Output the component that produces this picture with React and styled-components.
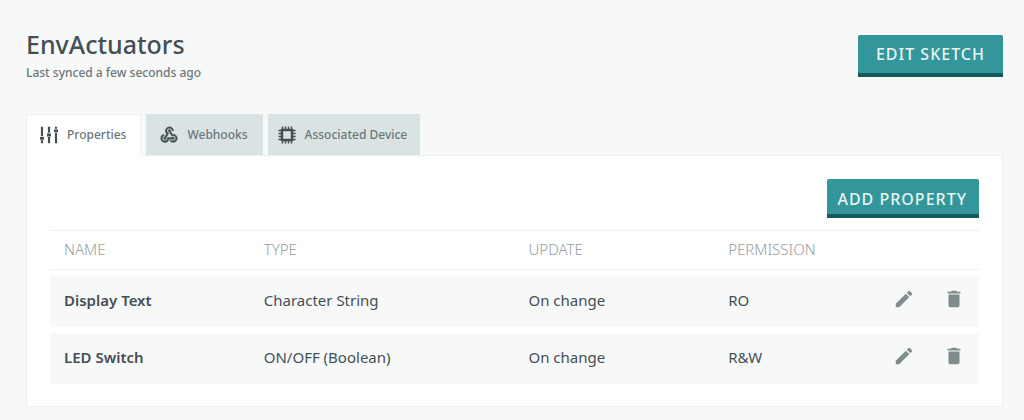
import React, { useState } from 'react';
import styled, { createGlobalStyle } from 'styled-components';
import { MdEdit, MdDelete, MdWebhook } from 'react-icons/md';

const GlobalStyle = createGlobalStyle`
    * {
        box-sizing: border-box;
    }

    body {
        margin: 0;
        background: #f7f9f8;
        color: #434f54;
        font-family: "Noto Sans", "Open Sans", sans-serif;
    }
`;

const Page = styled.main`
    padding: 30px 21px 13px 26px;
`;

const Header = styled.header`
    display: flex;
    justify-content: space-between;
    align-items: flex-start;
    height: 84px;

    h1 {
        margin: 0;
        font-size: 25px;
        font-weight: 500;
        line-height: 28px;
    }

    p {
        margin: 6px 0 0;
        font-size: 12px;
        font-weight: 500;
        line-height: 18px;
        color: #6b777b;
    }
`;

const Button = styled.button`
    height: ${props => props.$large ? '42px' : '39px'};
    margin-top: ${props => props.$large ? '5px' : '0'};
    padding: ${props => props.$large ? '0 18px' : '4px 12px 0 10px'};
    border: 0;
    border-bottom: 4px solid #16595c;
    border-radius: 2px 2px 0 0;
    background: #32969b;
    color: #e9f4f3;
    font-family: inherit;
    font-size: 16px;
    font-weight: 500;
    line-height: 20px;
    letter-spacing: 1px;
    text-transform: uppercase;
    cursor: pointer;
`;

const Tabs = styled.div`
    display: flex;
    gap: 5px;
`;

const Tab = styled.button`
    display: flex;
    align-items: center;
    gap: 8px;
    height: 42px;
    margin-bottom: -1px;
    padding: ${props => props.$wide ? '0 12px 0 8px' : '0 14px 0 12px'};
    position: relative;
    border: 1px solid ${props => props.$active ? '#ecf1f1' : '#dae3e3'};
    border-bottom-color: ${props => props.$active ? '#ffffff' : '#ecf1f1'};
    background: ${props => props.$active ? '#ffffff' : '#dae3e3'};
    color: #6b777b;
    font-family: inherit;
    font-size: 12px;
    font-weight: 500;
    line-height: 18px;
    cursor: pointer;

    svg {
        width: 20px;
        height: 20px;
        color: #434f54;
    }
`;

const WebhookIcon = styled(MdWebhook)`
    path:last-child {
        stroke-width: 0.5px;
    }
`;

const Panel = styled.section`
    padding: 23px 23px 16px;
    border: 1px solid #ecf1f1;
    background: #ffffff;
`;

const Toolbar = styled.div`
    display: flex;
    justify-content: flex-end;
    margin-bottom: 6px;
`;

const Table = styled.table`
    width: 100%;
    table-layout: fixed;
    border-collapse: separate;
    border-spacing: 0 6px;
    font-size: 15px;
    line-height: 20px;

    th, td {
        padding: 0 14px 3px;
        text-align: left;
    }

    thead th {
        height: 40px;
        padding-bottom: 2px;
        border-top: 1px solid #ecf1f1;
        border-bottom: 1px solid #ecf1f1;
        color: #95a0a2;
        font-weight: 300;
        text-transform: uppercase;
    }

    tbody th, tbody td {
        height: 51px;
        background: #f7f9f8;
    }

    tbody th {
        font-weight: 600;
    }
`;

const Column = styled.col`
    width: ${props => props.$width};
`;

const Actions = styled.div`
    display: flex;
    justify-content: flex-end;
    gap: 28px;
    padding-bottom: 2px;
`;

const IconButton = styled.button`
    display: flex;
    padding: 0;
    border: 0;
    background: none;
    color: #7f8c8d;
    cursor: pointer;

    svg {
        width: 22px;
        height: 22px;
    }
`;

function SlidersIcon() {
    return (
        <svg viewBox="0 0 20 20" fill="none" stroke="currentColor" strokeWidth="2.2" aria-hidden="true">
            <path d="M3 1.8v9.4M3 15.2v3M10 1.8v6M10 12v6.2M17 1.8v2M17 7.8v10.4" />
            <path strokeWidth="2.8" d="M1 13.4h4M8 10h4M15 5.8h4" />
        </svg>
    )
}

function ChipIcon() {
    return (
        <svg viewBox="0 0 20 20" fill="none" stroke="currentColor" aria-hidden="true">
            <rect x="5" y="5" width="10" height="10" strokeWidth="2.4" />
            <path strokeWidth="1.5" d="M5.5 1.5v3M8.5 1.5v3M11.5 1.5v3M14.5 1.5v3M5.5 15.5v3M8.5 15.5v3M11.5 15.5v3M14.5 15.5v3M1.5 5.5h3M1.5 8.5h3M1.5 11.5h3M1.5 14.5h3M15.5 5.5h3M15.5 8.5h3M15.5 11.5h3M15.5 14.5h3" />
        </svg>
    )
}

const tabs = [
    { name: 'Properties', Icon: SlidersIcon },
    { name: 'Webhooks', Icon: WebhookIcon },
    { name: 'Associated Device', Icon: ChipIcon, wide: true },
];

const properties = [
    { name: 'Display Text', type: 'Character String', update: 'On change', permission: 'RO' },
    { name: 'LED Switch', type: 'ON/OFF (Boolean)', update: 'On change', permission: 'R&W' },
];

export default function App() {

    const [activeTab, setActiveTab] = useState('Properties');

    return (
        <Page>
            <GlobalStyle />
            <Header>
                <div>
                    <h1>EnvActuators</h1>
                    <p>Last synced a few seconds ago</p>
                </div>
                <Button type="button" $large>Edit Sketch</Button>
            </Header>
            <Tabs role="tablist">
                {tabs.map(({ name, Icon, wide }) => (
                    <Tab
                    key={name}
                    type="button"
                    role="tab"
                    aria-selected={activeTab === name}
                    $active={activeTab === name}
                    $wide={wide}
                    onClick={() => setActiveTab(name)}
                    >
                        <Icon />
                        {name}
                    </Tab>
                ))}
            </Tabs>
            <Panel>
                <Toolbar>
                    <Button type="button">Add Property</Button>
                </Toolbar>
                <Table>
                    <colgroup>
                        <Column $width="21.5%" />
                        <Column $width="28.5%" />
                        <Column $width="21.5%" />
                        <Column />
                        <Column $width="14%" />
                    </colgroup>
                    <thead>
                        <tr>
                            <th scope="col">Name</th>
                            <th scope="col">Type</th>
                            <th scope="col">Update</th>
                            <th scope="col">Permission</th>
                            <th aria-label="Actions"></th>
                        </tr>
                    </thead>
                    <tbody>
                        {properties.map(property => (
                            <tr key={property.name}>
                                <th scope="row">{property.name}</th>
                                <td>{property.type}</td>
                                <td>{property.update}</td>
                                <td>{property.permission}</td>
                                <td>
                                    <Actions>
                                        <IconButton type="button" aria-label={'Edit ' + property.name}><MdEdit /></IconButton>
                                        <IconButton type="button" aria-label={'Delete ' + property.name}><MdDelete /></IconButton>
                                    </Actions>
                                </td>
                            </tr>
                        ))}
                    </tbody>
                </Table>
            </Panel>
        </Page>
    );
}
